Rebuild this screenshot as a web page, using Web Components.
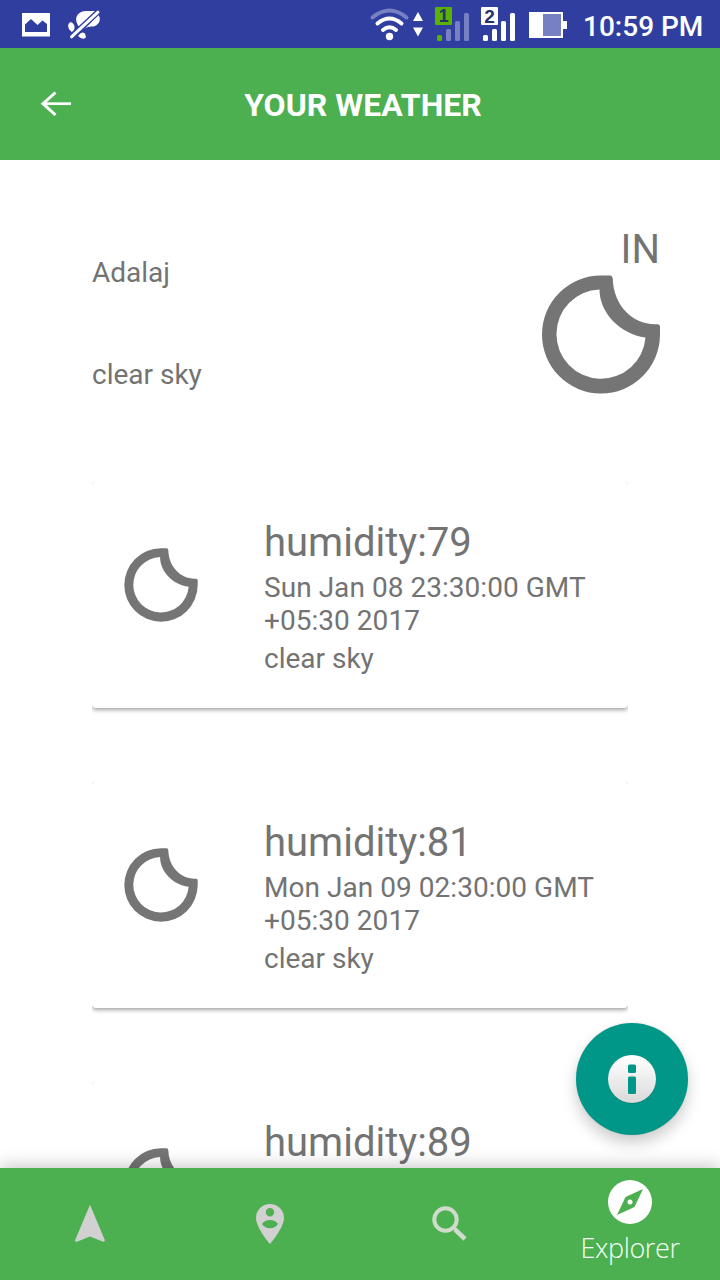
<!DOCTYPE html>
<html lang="en">
<head>
<meta charset="utf-8">
<title>Your Weather</title>
<style>
html,body{margin:0;height:100%;background:#fff}
body{font-family:Roboto,sans-serif;color:#737373;overflow:hidden}
</style>
</head>
<body>
<weather-app></weather-app>
<script>
function define(name, html) {
  const template = document.createElement('template');
  template.innerHTML = html;
  customElements.define(name, class extends HTMLElement {
    constructor() {
      super();
      this.attachShadow({ mode: 'open' }).appendChild(template.content.cloneNode(true));
    }
  });
}

define('moon-icon', `
<style>:host{display:block;width:118px;height:119px}svg{display:block;width:100%;height:100%}</style>
<svg viewBox="0 0 118 119" fill="#757575"><path fill-rule="evenodd" d="M59 .5H68Q70.5 .5 70.8 4C71.5 30 90 49 113 49.3H115.500Q118 49.300 118 52V60A59 59 0 1 1 59 .5ZM57.500 14.500A44.600 44.600 0 1 0 103.500 62.500C78 59 57.500 38 57.500 14.500Z"/></svg>`);

define('status-bar', `
<style>
:host{display:flex;box-sizing:border-box;height:48px;background:#303f9f;color:#fff;align-items:center}
svg{display:block;flex:none}
.time{font-size:28px;line-height:34px;font-weight:500;white-space:nowrap;margin:5px 0 0 3px}
</style>
<svg width="580" height="48" viewBox="0 0 580 48" fill="#fff">
  <path fill-rule="evenodd" d="M22 13H50V36.500H22ZM25 32H47V24L42.500 20.500L37.500 25L31 19L25 24.500Z"/>
  <path d="M77.500 24.500C73.500 16.500 79 11 86 11H95L80 26.500Q78 26.500 77.500 24.500ZM98.500 15C101 18 100 24 95 26C91 27.500 89 25 84 29.500ZM68.500 24C70 21 73 22 74.500 26Q75 30 72 32C69 30 67.500 27 68.500 24ZM78 36Q81 31 84.500 33Q86.500 36 85.500 38Q82 40 78 36Z"/>
  <path d="M71 37L98 12" stroke="#303f9f" stroke-width="5.500"/>
  <path d="M71.500 36.800L98 12.200" stroke="#fff" stroke-width="3" stroke-linecap="round"/>
  <g fill="none" stroke-width="4" stroke-linecap="round">
    <path d="M372.500 17.500Q389.500 3.500 406.500 17.500" stroke="#7680c3"/>
    <path d="M377.500 23.500Q389.500 13.500 401.500 23.500M383 30Q389.500 24.500 396 30" stroke="#fff"/>
  </g>
  <circle cx="389.500" cy="36.500" r="3.700"/>
  <path d="M418 12L423 21H413ZM418 36.500L423 27.500H413Z"/>
  <rect x="435" y="7" width="17" height="18" rx="1" fill="#59b300"/>
  <text x="443.700" y="22" font-family="Liberation Sans,sans-serif" font-size="18" font-weight="bold" fill="#26326f" text-anchor="middle">1</text>
  <rect x="437" y="35" width="5" height="6" rx="1.500" fill="#59b300"/>
  <g fill="#7680c3"><rect x="446" y="29" width="5" height="12" rx="1.500"/><rect x="455" y="21" width="5" height="20" rx="1.500"/><rect x="464" y="13" width="5" height="28" rx="1.500"/></g>
  <rect x="481" y="7" width="17" height="18" rx="1"/>
  <text x="489.500" y="22.500" font-family="Liberation Sans,sans-serif" font-size="19" font-weight="bold" fill="#26326f" text-anchor="middle">2</text>
  <rect x="483" y="35" width="5" height="6" rx="1.500"/><rect x="492" y="29" width="5" height="12" rx="1.500"/><rect x="501" y="21" width="5" height="20" rx="1.500"/><rect x="510" y="13" width="5" height="28" rx="1.500"/>
  <path d="M529 12H563V21H567V29H563V38H529Z"/><path d="M543 14H561V36H543Z" fill="#7680c3"/>
</svg>
<div class="time">10:59 PM</div>`);

define('app-bar', `
<style>
:host{display:grid;grid-template-columns:72px 1fr 66px;align-items:center;height:112px;background:#4caf50;color:#fff}
svg{display:block;margin-left:40px}
h1{margin:1px 0 0;text-align:center;font-size:32px;line-height:38px;font-weight:700;white-space:nowrap}
</style>
<svg width="32" height="26" viewBox="0 0 32 26" fill="none" stroke="#fff" stroke-width="2.700"><path d="M2.500 12.700H31"/><path d="M15.500 1.500L3 12.700L15.500 24" stroke-width="3"/></svg>
<h1><slot></slot></h1>`);

define('current-weather', `
<style>
:host{display:flex;justify-content:space-between;box-sizing:border-box;height:322px;padding:66px 60px 0 92px}
.info{display:flex;flex-direction:column;gap:69px;padding-top:30px;font-size:28px;line-height:33px}
.side{display:flex;flex-direction:column;align-items:flex-end}
.country{font-size:40px;line-height:47px;height:49px}
</style>
<div class="info"><slot name="city"></slot><slot name="sky"></slot></div>
<div class="side"><div class="country"><slot name="country"></slot></div><moon-icon></moon-icon></div>`);

define('forecast-card', `
<style>
:host{display:block;overflow:hidden;height:240px;margin:0 92px 60px;flex:none}
.card{display:flex;box-sizing:border-box;height:226px;background:#fff;border-radius:4px;padding:37px 0 0 32px;box-shadow:0 2px 4px rgba(0,0,0,.36),0 0 1px rgba(0,0,0,.08)}
moon-icon{width:74px;height:74px;margin:29px 66px 0 0;flex:none}
.h{font-size:40px;line-height:47px}
.d{font-size:28px;line-height:33px;width:336px;margin-top:5px;letter-spacing:.04px}
.s{font-size:28px;line-height:33px;margin-top:5px}
</style>
<div class="card"><moon-icon></moon-icon><div><div class="h"><slot name="humidity"></slot></div><div class="d"><slot name="date"></slot></div><div class="s"><slot name="sky"></slot></div></div></div>`);

define('info-button', `
<style>
:host{display:grid;place-items:center;width:112px;height:112px;border-radius:50%;background:#009688;box-shadow:0 8px 15px rgba(0,0,0,.2),0 0 2px rgba(0,0,0,.1)}
svg{display:block}
</style>
<svg width="50" height="50" viewBox="0 0 50 50"><defs><linearGradient id="g" x2="0" y2="1"><stop stop-color="#fff"/><stop offset=".35" stop-color="#f3f3f3"/><stop offset="1" stop-color="#d9d9d9"/></linearGradient></defs><circle cx="25" cy="25.800" r="24" fill="#007d71"/><circle cx="25" cy="25" r="24" fill="url(#g)"/><g fill="#009688"><rect x="21" y="10.500" width="8" height="8.500" rx="1.500"/><rect x="21" y="22.500" width="8" height="17.500" rx="1.500"/></g></svg>`);

define('bottom-nav', `
<style>
:host{display:grid;grid-template-columns:repeat(4,180px);height:112px;background:#4caf50;box-shadow:0 -1px 17px rgba(0,0,0,.25);position:relative}
div{display:flex;flex-direction:column;align-items:center;justify-content:center}
.on{justify-content:flex-start;padding-top:12px;color:#f5fff5}
svg{display:block}
span{font:300 27px/34px "Open Sans","Noto Sans",sans-serif;margin-top:7px;letter-spacing:-.4px}
</style>
<div><svg width="32" height="40" viewBox="0 0 32 40" fill="#d1d1d1"><path d="M16 .8L30.800 36Q31 38.500 28.500 37.500L16 32.500L3.500 37.500Q.5 38.500 1.200 36Z"/></svg></div>
<div><svg width="28" height="40" viewBox="0 0 28 40" fill="#d1d1d1"><path fill-rule="evenodd" d="M14 0A14 14 0 0 1 28 14C28 24 14 40 14 40S0 24 0 14A14 14 0 0 1 14 0ZM14 4A4.200 4.200 0 1 0 14 12.400A4.200 4.200 0 1 0 14 4ZM6 20C9 14.800 19 14.800 22 20C18 25.800 10 25.800 6 20Z"/></svg></div>
<div><svg width="36" height="36" viewBox="0 0 36 36" fill="none" stroke="#cfdccb"><circle cx="13.500" cy="13.500" r="11.200" stroke-width="4"/><path d="M21.500 21.500L24 24" stroke-width="3"/><path d="M23 23.500L33 33" stroke-width="4.500"/></svg></div>
<div class="on"><svg width="44" height="44" viewBox="0 0 44 44"><circle cx="22" cy="22" r="22" fill="#fff"/><path d="M35 9L26.500 27L9 35L17.500 17Z" fill="#4caf50"/><circle cx="22" cy="22" r="2.500" fill="#fff"/></svg><span>Explorer</span></div>`);

define('weather-app', `
<style>
:host{display:grid;grid-template-rows:48px 112px 1008px 112px;width:720px;height:1280px;position:relative;overflow:hidden;background:#fff}
main{overflow:hidden;display:flex;flex-direction:column}
current-weather{flex:none}
info-button{position:absolute;right:32px;bottom:145px}
</style>
<status-bar></status-bar>
<app-bar>YOUR WEATHER</app-bar>
<main>
<current-weather><span slot="city">Adalaj</span><span slot="sky">clear sky</span><span slot="country">IN</span></current-weather>
<forecast-card><span slot="humidity">humidity:79</span><span slot="date">Sun Jan 08 23:30:00 GMT +05:30 2017</span><span slot="sky">clear sky</span></forecast-card>
<forecast-card><span slot="humidity">humidity:81</span><span slot="date">Mon Jan 09 02:30:00 GMT +05:30 2017</span><span slot="sky">clear sky</span></forecast-card>
<forecast-card><span slot="humidity">humidity:89</span><span slot="date"></span><span slot="sky"></span></forecast-card>
</main>
<bottom-nav></bottom-nav>
<info-button></info-button>`);
</script>
</body>
</html>
